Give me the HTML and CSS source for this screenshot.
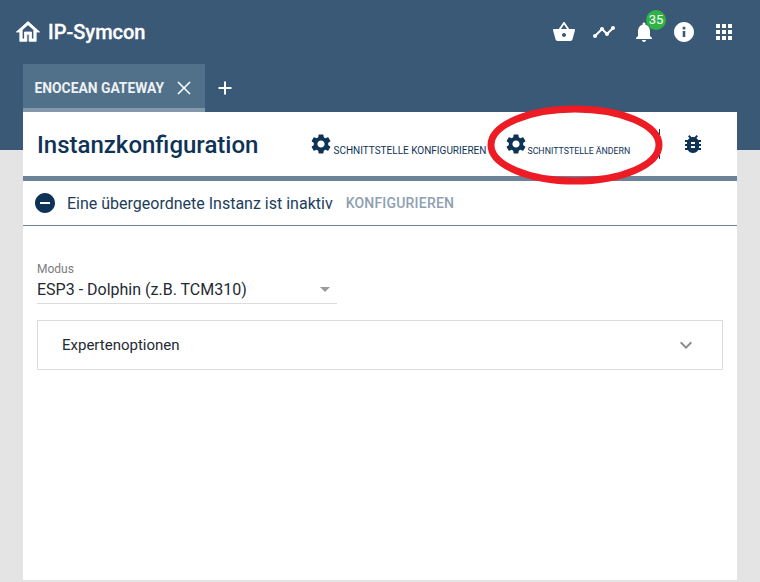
FILE: index.html
```html
<!DOCTYPE html>
<html lang="de">
<head>
<meta charset="utf-8">
<title>IP-Symcon</title>
<link rel="stylesheet" href="styles.css">
</head>
<body>
<header class="topbar">
  <div class="brand">
    <svg class="home" viewBox="0 0 24 24"><path d="M12 5.69l5 4.5V18h-2v-6H9v6H7v-7.81l5-4.5M12 3L2 12h3v8h6v-6h2v6h6v-8h3L12 3z"/></svg>
    <span class="brand-name">IP-Symcon</span>
  </div>
  <nav class="top-icons">
    <svg class="top-icon" viewBox="0 0 24 24"><path d="M17.21 9l-4.38-6.56c-.19-.28-.51-.42-.83-.42-.32 0-.64.14-.83.43L6.79 9H2c-.55 0-1 .45-1 1 0 .09.01.18.04.27l2.54 9.27c.23.84 1 1.46 1.92 1.46h13c.92 0 1.69-.62 1.93-1.46l2.54-9.27L23 10c0-.55-.45-1-1-1h-4.79zM9 9l3-4.4L15 9H9zm3 8c-1.1 0-2-.9-2-2s.9-2 2-2 2 .9 2 2-.9 2-2 2z"/></svg>
    <svg class="top-icon" viewBox="0 0 24 24"><path d="M23 8c0 1.1-.9 2-2 2-.18 0-.35-.02-.51-.07l-3.56 3.55c.05.16.07.34.07.52 0 1.1-.9 2-2 2s-2-.9-2-2c0-.18.02-.36.07-.52l-2.55-2.55c-.16.05-.34.07-.52.07s-.36-.02-.52-.07l-4.55 4.56c.05.16.07.33.07.51 0 1.1-.9 2-2 2s-2-.9-2-2 .9-2 2-2c.18 0 .35.02.51.07l4.56-4.55C8.02 9.36 8 9.18 8 9c0-1.1.9-2 2-2s2 .9 2 2c0 .18-.02.36-.07.52l2.55 2.55c.16-.05.34-.07.52-.07s.36.02.52.07l3.55-3.56C19.02 8.35 19 8.18 19 8c0-1.1.9-2 2-2s2 .9 2 2z"/></svg>
    <span class="bell">
      <svg class="top-icon" viewBox="0 0 24 24"><path d="M12 22c1.1 0 2-.9 2-2h-4c0 1.1.89 2 2 2zm6-6v-5c0-3.07-1.64-5.64-4.5-6.32V4c0-.83-.67-1.5-1.5-1.5s-1.5.67-1.5 1.5v.68C7.63 5.36 6 7.92 6 11v5l-2 2v1h16v-1l-2-2z"/></svg>
      <span class="badge">35</span>
    </span>
    <svg class="top-icon" viewBox="0 0 24 24"><path d="M12 2C6.48 2 2 6.48 2 12s4.48 10 10 10 10-4.48 10-10S17.52 2 12 2zm1.3 15h-2.6v-6h2.6v6zm0-7.6h-2.6V6.8h2.6v2.6z"/></svg>
    <svg class="top-icon" viewBox="0 0 24 24"><path d="M4 8h4V4H4v4zm6 12h4v-4h-4v4zm-6 0h4v-4H4v4zm0-6h4v-4H4v4zm6 0h4v-4h-4v4zm6-10v4h4V4h-4zm-6 4h4V4h-4v4zm6 6h4v-4h-4v4zm0 6h4v-4h-4v4z"/></svg>
  </nav>
</header>

<div class="tabs">
  <div class="tab">
    <span class="tab-label">ENOCEAN GATEWAY</span>
    <svg class="tab-close" viewBox="0 0 16 16"><path d="M2 2l12 12M14 2L2 14"/></svg>
  </div>
  <svg class="tab-add" viewBox="0 0 16 16"><path d="M8 1.500v13M1.500 8h13"/></svg>
</div>

<main class="card">
  <div class="card-head">
    <h1 class="title">Instanzkonfiguration</h1>
    <div class="actions">
      <button class="action">
        <svg class="gear" viewBox="0 0 24 24"><path d="M19.14,12.94c0.04-0.3,0.06-0.61,0.06-0.94c0-0.32-0.02-0.64-0.07-0.94l2.03-1.58c0.18-0.14,0.23-0.41,0.12-0.61 l-1.92-3.32c-0.12-0.22-0.37-0.29-0.59-0.22l-2.39,0.96c-0.5-0.38-1.03-0.7-1.62-0.94L14.4,2.81c-0.04-0.24-0.24-0.41-0.48-0.41 h-3.84c-0.24,0-0.43,0.17-0.47,0.41L9.25,5.35C8.66,5.59,8.12,5.92,7.63,6.29L5.24,5.33c-0.22-0.08-0.47,0-0.59,0.22L2.74,8.87 C2.62,9.08,2.66,9.34,2.86,9.48l2.03,1.58C4.84,11.36,4.8,11.69,4.8,12s0.02,0.64,0.07,0.94l-2.03,1.58 c-0.18,0.14-0.23,0.41-0.12,0.61l1.92,3.32c0.12,0.22,0.37,0.29,0.59,0.22l2.39-0.96c0.5,0.38,1.03,0.7,1.62,0.94l0.36,2.54 c0.05,0.24,0.24,0.41,0.48,0.41h3.84c0.24,0,0.44-0.17,0.47-0.41l0.36-2.54c0.59-0.24,1.13-0.56,1.62-0.94l2.39,0.96 c0.22,0.08,0.47,0,0.59-0.22l1.92-3.32c0.12-0.22,0.07-0.47-0.12-0.61L19.14,12.94z M12,15.6c-1.98,0-3.6-1.62-3.6-3.6 s1.62-3.6,3.6-3.6s3.6,1.62,3.6,3.6S13.98,15.6,12,15.6z"/></svg>
        <span class="action-label">SCHNITTSTELLE KONFIGURIEREN</span>
      </button>
      <button class="action action-second">
        <svg class="gear" viewBox="0 0 24 24"><path d="M19.14,12.94c0.04-0.3,0.06-0.61,0.06-0.94c0-0.32-0.02-0.64-0.07-0.94l2.03-1.58c0.18-0.14,0.23-0.41,0.12-0.61 l-1.92-3.32c-0.12-0.22-0.37-0.29-0.59-0.22l-2.39,0.96c-0.5-0.38-1.03-0.7-1.62-0.94L14.4,2.81c-0.04-0.24-0.24-0.41-0.48-0.41 h-3.84c-0.24,0-0.43,0.17-0.47,0.41L9.25,5.35C8.66,5.59,8.12,5.92,7.63,6.29L5.24,5.33c-0.22-0.08-0.47,0-0.59,0.22L2.74,8.87 C2.62,9.08,2.66,9.34,2.86,9.48l2.03,1.58C4.84,11.36,4.8,11.69,4.8,12s0.02,0.64,0.07,0.94l-2.03,1.58 c-0.18,0.14-0.23,0.41-0.12,0.61l1.92,3.32c0.12,0.22,0.37,0.29,0.59,0.22l2.39-0.96c0.5,0.38,1.03,0.7,1.62,0.94l0.36,2.54 c0.05,0.24,0.24,0.41,0.48,0.41h3.84c0.24,0,0.44-0.17,0.47-0.41l0.36-2.54c0.59-0.24,1.13-0.56,1.62-0.94l2.39,0.96 c0.22,0.08,0.47,0,0.59-0.22l1.92-3.32c0.12-0.22,0.07-0.47-0.12-0.61L19.14,12.94z M12,15.6c-1.98,0-3.6-1.62-3.6-3.6 s1.62-3.6,3.6-3.6s3.6,1.62,3.6,3.6S13.98,15.6,12,15.6z"/></svg>
        <span class="action-label action-label-small">SCHNITTSTELLE ÄNDERN</span>
      </button>
      <span class="divider"></span>
      <svg class="bug" viewBox="0 0 24 24"><path d="M20 8h-2.81c-.45-.78-1.07-1.45-1.82-1.96L17 4.41 15.59 3l-2.17 2.17C12.96 5.06 12.49 5 12 5c-.49 0-.96.06-1.41.17L8.41 3 7 4.41l1.62 1.63C7.88 6.55 7.26 7.22 6.81 8H4v2h2.090c-.05.33-.09.66-.09 1v1H4v2h2v1c0 .34.04.67.09 1H4v2h2.810c1.04 1.79 2.97 3 5.19 3s4.150-1.210 5.190-3H20v-2h-2.090c.05-.33.09-.66.09-1v-1h2v-2h-2v-1c0-.34-.04-.67-.09-1H20V8zm-6 8h-4v-2h4v2zm0-4h-4v-2h4v2z"/></svg>
    </div>
  </div>

  <div class="status">
    <svg class="status-icon" viewBox="0 0 24 24"><path d="M12 2C6.480 2 2 6.480 2 12s4.480 10 10 10 10-4.480 10-10S17.520 2 12 2zm5 11H7v-2h10v2z"/></svg>
    <span class="status-text">Eine übergeordnete Instanz ist inaktiv</span>
    <span class="status-link">KONFIGURIEREN</span>
  </div>

  <div class="form">
    <div class="field">
      <label class="field-label">Modus</label>
      <div class="select">
        <span class="select-value">ESP3 - Dolphin (z.B. TCM310)</span>
        <span class="select-arrow"></span>
      </div>
    </div>
    <div class="panel">
      <span class="panel-title">Expertenoptionen</span>
      <svg class="chevron" viewBox="0 0 24 24"><path d="M7.410 8.590L12 13.170l4.590-4.580L18 10l-6 6-6-6z"/></svg>
    </div>
  </div>
</main>

<svg class="marker" viewBox="0 0 184 88"><ellipse cx="92" cy="44" rx="84" ry="36"/></svg>
</body>
</html>
```

FILE: styles.css
```css
* { box-sizing: border-box; }

html, body { height: 100%; }

body {
  margin: 0;
  overflow: hidden;
  position: relative;
  font-family: Roboto, "Liberation Sans", sans-serif;
  background: linear-gradient(#3a5976 150px, #e4e4e4 150px);
  color: #0e3356;
}

.topbar {
  height: 64px;
  display: flex;
  align-items: center;
  justify-content: space-between;
  padding: 0 24px 0 14px;
}

.brand { display: flex; align-items: center; gap: 6px; }
.home { width: 28px; height: 28px; fill: #fff; stroke: #fff; stroke-width: 0.7; }
.brand-name { font-size: 20px; font-weight: 500; color: #fff; -webkit-text-stroke: 0.3px #fff; }

.top-icons { display: flex; align-items: center; gap: 16px; }
.top-icon { width: 24px; height: 24px; fill: #fff; display: block; }
.bell { position: relative; display: block; }
.badge {
  position: absolute;
  left: 14px;
  top: -10px;
  width: 20px;
  height: 20px;
  border-radius: 50%;
  background: #2fb344;
  color: #fff;
  font-size: 13px;
  line-height: 20px;
  text-align: center;
}

.tabs {
  height: 48px;
  margin-left: 23px;
  display: flex;
  align-items: center;
}
.tab {
  width: 182px;
  height: 48px;
  background: #51708a;
  border-bottom: 4px solid #8398ab;
  display: flex;
  align-items: center;
  gap: 12px;
  padding: 4px 0 0 11.500px;
}
.tab-label { font-size: 13.850px; font-weight: 700; color: #eef1f4; white-space: nowrap; }
.tab-close { width: 16px; height: 16px; fill: none; stroke: #fff; stroke-width: 1.600; }
.tab-add { width: 16px; height: 16px; margin-left: 12px; fill: none; stroke: #fff; stroke-width: 2; }

.card {
  width: 714px;
  height: 468px;
  margin-left: 23px;
  background: #fff;
}

.card-head {
  height: 69px;
  display: flex;
  align-items: center;
  padding: 0 0 0 14px;
  border-bottom: 5px solid #6b8297;
}
.title { margin: 2px 0 0; font-size: 24px; font-weight: 500; color: #0e3356; white-space: nowrap; }

.actions { display: flex; align-items: center; margin-left: 51px; }
.action {
  display: flex;
  align-items: flex-start;
  padding: 0;
  border: 0;
  background: none;
  font: inherit;
  color: inherit;
}
.action-second { margin-left: 18px; }
.gear { width: 24px; height: 24px; fill: #0e3356; display: block; }
.action-label { font-size: 10px; line-height: 11px; margin-top: 13px; white-space: nowrap; }
.action-label-small { font-size: 8.800px; margin-top: 14px; margin-left: -1px; }
.divider { width: 1px; height: 30px; background: #0e3356; margin-left: 29px; }
.bug { width: 24px; height: 24px; fill: #0e3356; margin-left: 21px; }

.status {
  height: 45px;
  display: flex;
  align-items: center;
  padding-left: 10px;
  border-bottom: 1px solid #6b8297;
}
.status-icon { width: 24px; height: 24px; fill: #0e3356; }
.status-text { margin-left: 10px; font-size: 16px; color: #1c3d5c; white-space: nowrap; }
.status-link { margin-left: 13px; font-size: 14px; font-weight: 500; letter-spacing: 0.2px; color: #8ea0b0; white-space: nowrap; }

.form { padding: 36px 14px 0; }
.field { width: 300px; }
.field-label { display: block; font-size: 12px; line-height: 14px; color: #7c7c7c; }
.select {
  height: 28px;
  display: flex;
  align-items: center;
  justify-content: space-between;
  padding-right: 7px;
  border-bottom: 1px solid #dcdcdc;
}
.select-value { font-size: 16px; color: #1f2a33; white-space: nowrap; }
.select-arrow {
  width: 0;
  height: 0;
  border-left: 5px solid transparent;
  border-right: 5px solid transparent;
  border-top: 5px solid #9a9a9a;
}

.panel {
  height: 50px;
  margin-top: 16px;
  display: flex;
  align-items: center;
  justify-content: space-between;
  padding: 0 24px 0 24px;
  border: 1px solid #dcdcdc;
}
.panel-title { font-size: 15px; color: #1f2a33; }
.chevron { width: 24px; height: 24px; fill: #8c8c8c; }

.marker {
  position: absolute;
  left: 483px;
  top: 101px;
  width: 184px;
  height: 88px;
  fill: none;
  stroke: #ed1c24;
  stroke-width: 7;
}
```
